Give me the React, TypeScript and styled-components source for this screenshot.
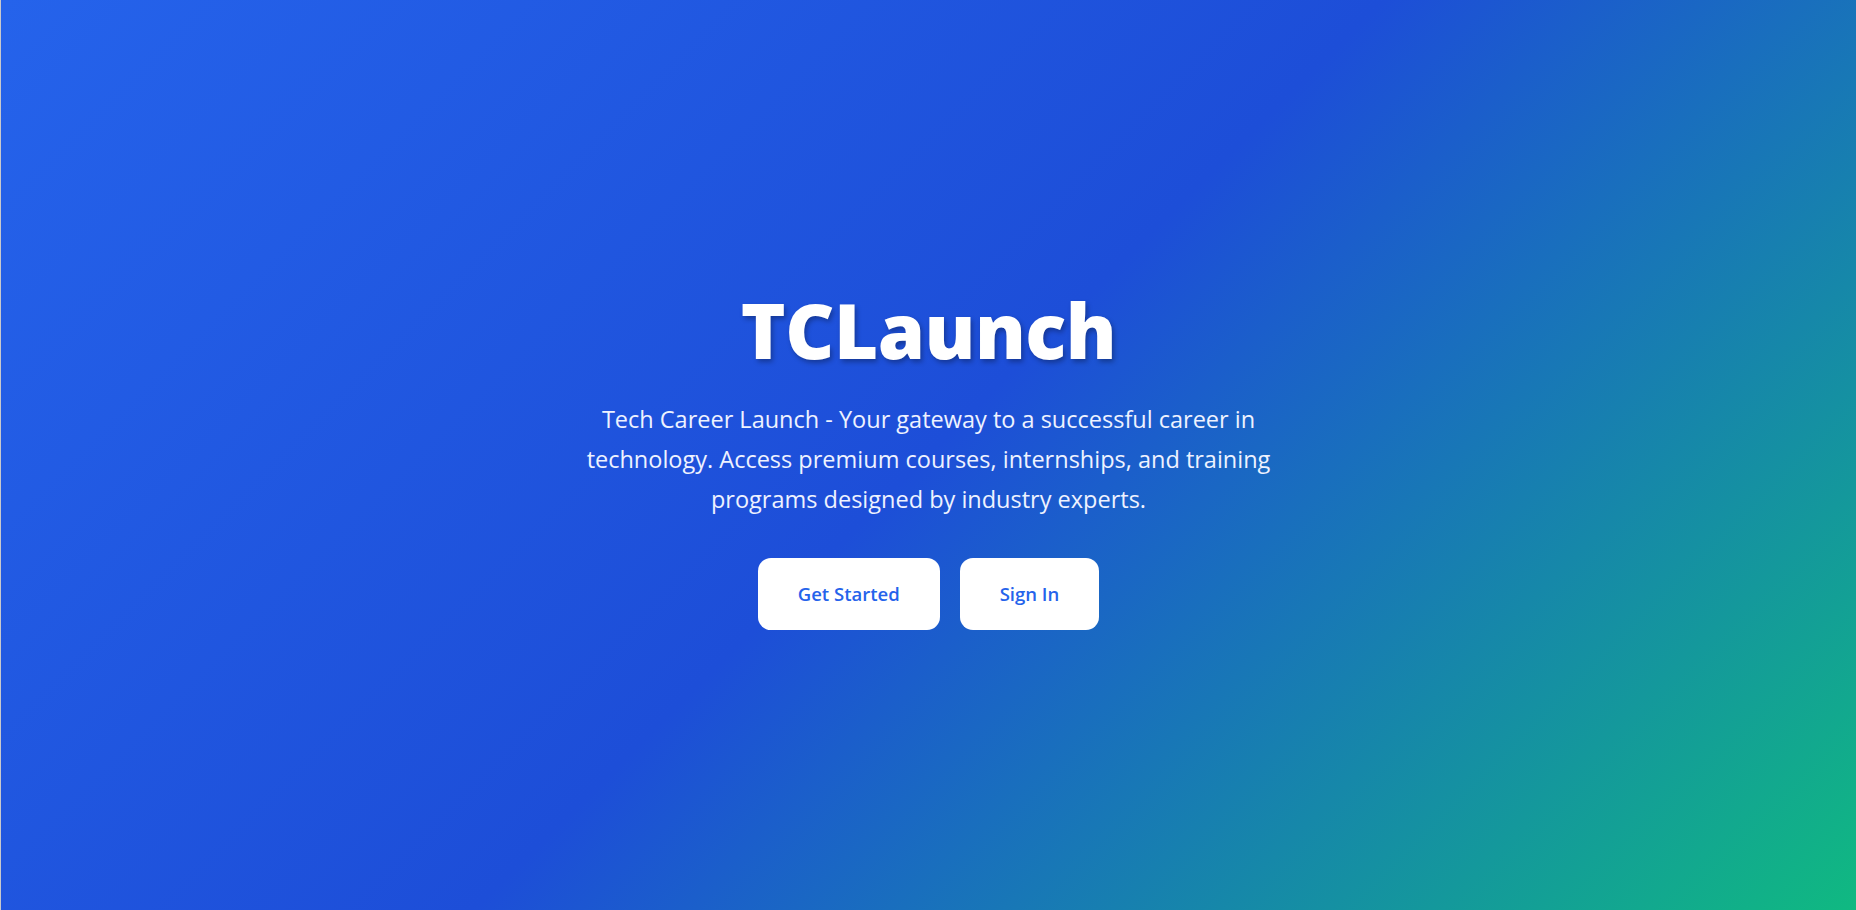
import React from 'react';
import styled, { createGlobalStyle } from 'styled-components';

const GlobalStyle = createGlobalStyle`
  html, body {
    margin: 0;
    padding: 0;
  }
  body {
    font-family: 'Open Sans', 'Noto Sans', sans-serif;
  }
`

const Hero = styled.main`
  min-height: 100vh;
  box-sizing: border-box;
  display: flex;
  align-items: center;
  justify-content: center;
  border-left: 1px solid #c8c8cc;
  background: linear-gradient(135deg, #2563eb 0%, #1d4ed8 50%, #10b981 100%);
`

const Content = styled.div`
  display: flex;
  flex-direction: column;
  align-items: center;
  text-align: center;
  max-width: 780px;
  padding: 0 16px;
`

const Title = styled.h1`
  margin: 4px 0 23px 0;
  color: #ffffff;
  font-size: 76px;
  font-weight: 800;
  line-height: 1.2;
  letter-spacing: -0.5px;
  text-shadow: 2px 3px 5px rgba(0, 0, 0, 0.3);
`

const Subtitle = styled.p`
  margin: 0 0 39px 0;
  color: #eef2ff;
  font-size: 23.5px;
  line-height: 40px;
  max-width: 730px;
`

const Actions = styled.div`
  display: flex;
  gap: 20px;
`

const ActionButton = styled.button`
  border: none;
  background: #ffffff;
  color: #2563eb;
  font-family: inherit;
  font-size: 18.5px;
  font-weight: 600;
  height: 72px;
  padding: 0 40px;
  border-radius: 13px;
  cursor: pointer;
`

const App = () => {
  return (
    <>
      <GlobalStyle />
      <Hero>
        <Content>
          <Title>TCLaunch</Title>
          <Subtitle>
            Tech Career Launch - Your gateway to a successful career in technology. Access premium courses, internships, and training programs designed by industry experts.
          </Subtitle>
          <Actions>
            <ActionButton>Get Started</ActionButton>
            <ActionButton>Sign In</ActionButton>
          </Actions>
        </Content>
      </Hero>
    </>
  );
};

export default App;
